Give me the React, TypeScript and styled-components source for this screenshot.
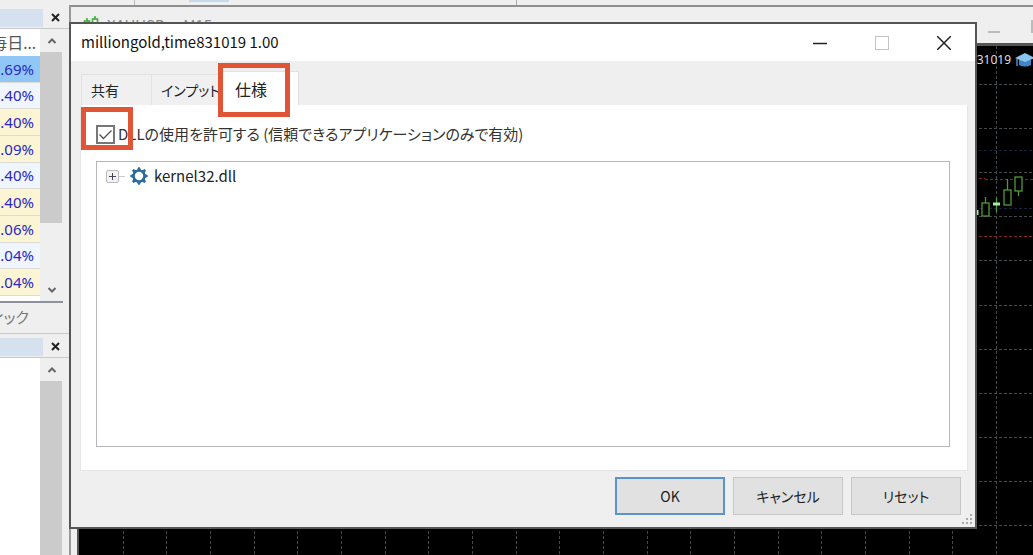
import React, { useState } from "react";
import styled, { createGlobalStyle } from "styled-components";

const GlobalStyle = createGlobalStyle`
  * { box-sizing: border-box; }
  body {
    margin: 0;
    background: #efefef;
    font-family: "Noto Sans CJK JP", "Noto Sans", sans-serif;
    font-feature-settings: "palt";
    font-size: 15px;
    line-height: 20px;
    color: #222;
  }
  button { font: inherit; color: inherit; margin: 0; padding: 0; border: 0; background: none; }
`;

const Desktop = styled.div`
  position: relative;
  display: flex;
  flex-direction: column;
  height: 100vh;
  min-height: 540px;
  overflow: hidden;
`;

const Toolbar = styled.div`
  display: flex;
  flex: none;
  height: 5px;
  padding-left: 134px;
`;

const ToolGroup = styled.div`
  width: 383px;
  padding-left: 54px;
  border-left: 1px solid #bbb;
  border-right: 1px solid #aaa;
`;

const ActiveTool = styled.div`
  width: 40px;
  height: 2px;
  background: #c3daf0;
`;

const Workspace = styled.div`
  display: flex;
  flex: 1;
  min-height: 0;
`;

const Sidebar = styled.aside`
  display: flex;
  flex: none;
  flex-direction: column;
  width: 69px;
  overflow: hidden;
`;

const PanelHeader = styled.div`
  display: flex;
  flex: none;
  align-items: center;
  height: 24px;
  padding-top: 2px;
  border-bottom: 1px solid #c8c8c8;
`;

const PanelCaption = styled.div`
  width: 43px;
  height: 18px;
  background: #d5e1ef;
`;

const PanelClose = styled.button`
  display: grid;
  place-items: center;
  width: 24px;
  height: 20px;
`;

const PanelBody = styled.div<{ $grow?: boolean }>`
  display: flex;
  flex: ${(p) => (p.$grow ? "1" : "none")};
  height: ${(p) => (p.$grow ? "auto" : "274px")};
  margin-right: 6px;
  border-bottom: ${(p) => (p.$grow ? "0" : "2px solid #8d9199")};
  background: #fff;
`;

const Quotes = styled.table`
  width: 40px;
  height: 267px;
  table-layout: fixed;
  border-collapse: collapse;
  background: #fff;
  font-family: "Noto Sans", "Noto Sans CJK JP", sans-serif;
`;

const Cell = styled.div`
  display: flex;
  justify-content: flex-end;
  width: 40px;
  padding-right: 6px;
  overflow: hidden;
  white-space: nowrap;
`;

const HeadCell = styled(Cell)`
  padding-right: 4px;
  color: #555;
  font-size: 16px;
  font-weight: 400;
`;

const QuoteRow = styled.tr<{ $tone: string }>`
  background: ${(p) => p.$tone};
  color: #2a27c4;
  td, th { padding: 0; }
  th { height: 27px; }
  td { border-bottom: 1px solid #dcdcd4; }
`;

const Blank = styled.div`
  width: 40px;
  background: #fff;
`;

const ScrollBar = styled.div`
  display: flex;
  flex-direction: column;
  width: 23px;
  background: #efefef;
`;

const ScrollArrow = styled.button`
  display: grid;
  flex: none;
  place-items: center;
  height: 23px;
`;

const ScrollThumb = styled.div<{ $size?: number }>`
  flex: ${(p) => (p.$size ? `0 0 ${p.$size}px` : "1")};
  margin-right: 1px;
  background: #cbcbcb;
`;

const Spacer = styled.div`
  flex: 1;
`;

const PanelTab = styled.div`
  display: flex;
  flex: none;
  justify-content: flex-end;
  height: 31px;
  padding: 4px 40px 0 0;
  border-bottom: 1px solid #c8c8c8;
  color: #777;
  white-space: nowrap;
`;

const ChartWindow = styled.section`
  display: flex;
  flex: 1;
  flex-direction: column;
  min-width: 0;
  padding-left: 6px;
  border-top: 2px solid #8f8f8f;
  border-left: 2px solid #999;
`;

const ChartTitle = styled.header`
  display: flex;
  flex: none;
  align-items: center;
  justify-content: space-between;
  height: 36px;
  padding-left: 6px;
  color: #888;
  overflow: hidden;
`;

const ChartName = styled.div`
  display: flex;
  align-items: center;
  gap: 6px;
  font-size: 15px;
`;

const ChartArea = styled.div`
  position: relative;
  display: flex;
  flex: 1;
  justify-content: flex-end;
  align-items: flex-start;
  padding-top: 4px;
  border-top: 3px solid #555;
  border-left: 2px solid #555;
  background: #000;
  overflow: hidden;
`;

const ChartPlot = styled.svg`
  position: absolute;
  top: 0;
  right: 0;
`;

const ExpertName = styled.div`
  display: flex;
  position: relative;
  gap: 4px;
  align-items: center;
  color: #ddd;
  font: 12px/20px "Noto Sans", sans-serif;
`;

const Dialog = styled.div`
  position: absolute;
  top: 22px;
  left: 69px;
  right: 56px;
  display: flex;
  flex-direction: column;
  border: 2px solid #555;
  background: #efefef;
`;

const TitleBar = styled.header`
  display: flex;
  align-items: center;
  justify-content: space-between;
  height: 37px;
  padding-left: 10px;
  background: #fff;
  color: #111;
`;

const DialogName = styled.h1`
  margin: 0;
  padding-bottom: 2px;
  font-size: 15px;
  font-weight: 400;
`;

const WindowButtons = styled.div`
  display: flex;
`;

const WindowButton = styled.button`
  display: grid;
  place-items: center;
  width: 62px;
  height: 37px;
`;

const Tabs = styled.div`
  display: flex;
  align-items: flex-end;
  height: 44px;
  padding-left: 10px;
`;

const Tab = styled.button<{ $active?: boolean; $width: number }>`
  position: relative;
  width: ${(p) => p.$width}px;
  height: ${(p) => (p.$active ? 34 : 31)}px;
  padding-left: ${(p) => (p.$active ? 16 : 9)}px;
  border: 1px solid #e2e2e2;
  border-bottom: 0;
  border-left-width: ${(p) => (p.$active ? 0 : 1)}px;
  border-right-width: ${(p) => (p.$active ? 1 : 0)}px;
  background: ${(p) => (p.$active ? "#fff" : "#f0f0f0")};
  font-size: ${(p) => (p.$active ? 16 : 14)}px;
  text-align: left;
  white-space: nowrap;
`;

const Marker = styled.span<{ $x: number; $y: number; $w: number; $h: number }>`
  position: absolute;
  left: ${(p) => p.$x}px;
  top: ${(p) => p.$y}px;
  width: ${(p) => p.$w}px;
  height: ${(p) => p.$h}px;
  border: 5px solid #e05535;
  pointer-events: none;
`;

const Page = styled.div`
  display: flex;
  flex-direction: column;
  gap: 17px;
  margin: 0 7px 0 9px;
  padding: 19px 17px 23px 15px;
  border: 1px solid #e4e4e4;
  border-top: 0;
  background: #fff;
`;

const Permission = styled.label`
  position: relative;
  display: flex;
  align-items: center;
  gap: 3px;
  height: 20px;
  color: #333;
`;

const TickBox = styled.input`
  appearance: none;
  width: 19px;
  height: 19px;
  margin: 0;
  border: 2px solid #777;
  background: #fff;
  &:checked {
    background: #fff url("data:image/svg+xml,%3Csvg xmlns='http://www.w3.org/2000/svg' viewBox='0 0 15 15'%3E%3Cpath d='M1.5 7.5L5.5 11.5L13.5 3.5' fill='none' stroke='%23555' stroke-width='1.4'/%3E%3C/svg%3E") center / 15px 15px no-repeat;
  }
`;

const ModuleList = styled.ul`
  height: 286px;
  margin: 0;
  padding: 4px 9px;
  border: 1px solid #b4b6ba;
  list-style: none;
`;

const ModuleItem = styled.li`
  display: flex;
  align-items: center;
  height: 20px;
`;

const Expander = styled.button`
  display: grid;
  place-items: center;
  width: 13px;
  height: 13px;
  border: 1px solid #bbb;
  border-radius: 2px;
  background: #f2f2f4;
`;

const Branch = styled.span`
  width: 6px;
  margin-right: 5px;
  border-top: 1px solid #ccc;
`;

const ModuleName = styled.span`
  margin-left: 6px;
  font-size: 15px;
`;

const Actions = styled.footer`
  display: flex;
  position: relative;
  justify-content: flex-end;
  gap: 8px;
  padding: 6px 14px 12px;
`;

const Action = styled.button<{ $primary?: boolean }>`
  width: 110px;
  height: 38px;
  border: ${(p) => (p.$primary ? "2px solid #5b94cc" : "1px solid #c6c6c6")};
  background: #e1e1e1;
  font-size: 14px;
`;

const Grip = styled.svg`
  position: absolute;
  right: 2px;
  bottom: 2px;
`;

const quotes = [".69%", ".40%", ".40%", ".09%", ".40%", ".40%", ".06%", ".04%", ".04%"];
const tones = ["#91c7f7", "#f0f6ff", "#fcf5d4", "#fcf5d4", "#f0f6ff", "#fcf5d4", "#fcf5d4", "#f0f6ff", "#fcf5d4"];

const Chevron = ({ down = false }: { down?: boolean }) => (
  <svg width="10" height="8" viewBox="0 0 10 8" fill="none" stroke="#666" strokeWidth="2">
    <path d={down ? "M1.5 2L5 5.5L8.5 2" : "M1.5 6L5 2.5L8.5 6"} />
  </svg>
);

const SmallCross = () => (
  <svg width="9" height="9" viewBox="0 0 9 9" stroke="#222" strokeWidth="2">
    <path d="M1 1L8 8M8 1L1 8" />
  </svg>
);

const Gear = () => (
  <svg width="18" height="18" viewBox="0 0 18 18" stroke="#2a6a9e" fill="none">
    <circle cx="9" cy="9" r="5.4" strokeWidth="2.4" />
    {[0, 45, 90, 135, 180, 225, 270, 315].map((a) => (
      <path key={a} d="M7.6 2.8L8.4 0.7H9.6L10.4 2.8Z" fill="#2a6a9e" strokeWidth="1" transform={`rotate(${a} 9 9)`} />
    ))}
  </svg>
);

const columns = Array.from({ length: 21 }, (_, i) => 917 - i * 43.67);
const lines = Array.from({ length: 11 }, (_, i) => 38 + i * 44.1);

/* The plot has a fixed scale and stays anchored to the newest bar on the right. */
const Plot = () => (
  <ChartPlot width="954" height="509" viewBox="0 0 954 509" fill="none" aria-hidden="true">
    <g stroke="#44494e" strokeDasharray="3 2">
      {columns.map((x) => <path key={x} d={`M${Math.round(x) + 0.5} 0V509`} />)}
      {lines.map((y) => <path key={y} d={`M0 ${Math.round(y) + 0.5}H954`} />)}
    </g>
    <g strokeDasharray="3 2">
      <path d="M890 104.5H954M890 162.5H954" stroke="#16233f" />
      <path d="M890 132.5H906M906 133.5H954M890 190.5H954" stroke="#8c2224" />
    </g>
    <g stroke="#4f9a35" strokeWidth="1.3" fill="#000">
      <path d="M906.5 151V157M928.5 133V144M939.5 145V150M917.5 152V166" />
      <rect x="903" y="157" width="7" height="13" />
      <rect x="925" y="144" width="7" height="15" />
      <rect x="936" y="131" width="7" height="14" />
    </g>
    <path d="M914 158H921M898 164V169" stroke="#a8eaa0" strokeWidth="3" />
  </ChartPlot>
);

export default function App() {
  const [allowed, setAllowed] = useState(true);
  return (
    <Desktop>
      <GlobalStyle />
      <Toolbar>
        <ToolGroup><ActiveTool /></ToolGroup>
      </Toolbar>
      <Workspace>
        <Sidebar>
          <PanelHeader>
            <PanelCaption />
            <PanelClose aria-label="閉じる"><SmallCross /></PanelClose>
          </PanelHeader>
          <PanelBody>
            <Quotes>
              <thead>
                <QuoteRow $tone="#fff"><th><HeadCell>毎日...</HeadCell></th></QuoteRow>
              </thead>
              <tbody>
                {quotes.map((q, i) => (
                  <QuoteRow key={i} $tone={tones[i]}><td><Cell>{q}</Cell></td></QuoteRow>
                ))}
              </tbody>
            </Quotes>
            <ScrollBar>
              <ScrollArrow aria-label="上へ"><Chevron /></ScrollArrow>
              <ScrollThumb $size={171} />
              <Spacer />
              <ScrollArrow aria-label="下へ"><Chevron down /></ScrollArrow>
            </ScrollBar>
          </PanelBody>
          <PanelTab>ィック</PanelTab>
          <PanelHeader>
            <PanelCaption />
            <PanelClose aria-label="閉じる"><SmallCross /></PanelClose>
          </PanelHeader>
          <PanelBody $grow>
            <Blank />
            <ScrollBar>
              <ScrollArrow aria-label="上へ"><Chevron /></ScrollArrow>
              <ScrollThumb />
            </ScrollBar>
          </PanelBody>
        </Sidebar>
        <ChartWindow>
          <ChartTitle>
            <ChartName>
              <svg width="18" height="20" viewBox="0 0 18 20" fill="none" stroke="#3fae3f" strokeWidth="1.6">
                <path d="M4 3V6M12 1V4M4 15V18M12 15V18" />
                <rect x="1.5" y="6" width="5" height="9" />
                <rect x="9.5" y="4" width="5" height="11" />
              </svg>
              XAUUSDm,M15
            </ChartName>
            <svg width="45" height="16" viewBox="0 0 45 16" fill="none" stroke="#bbb" strokeWidth="2">
              <path d="M0 15H12" />
              <rect x="44" y="4" width="12" height="11" />
            </svg>
          </ChartTitle>
          <ChartArea>
            <Plot />
            <ExpertName>
              31019
              <svg width="18" height="16" viewBox="0 0 18 16">
                <path d="M4 8V13Q10 16 16 13V8Z" fill="#3f86c8" />
                <path d="M0 6L10 1L20 6L10 10Z" fill="#8cc4f0" />
                <path d="M2 7V14" stroke="#3f86c8" strokeWidth="1.6" />
              </svg>
            </ExpertName>
          </ChartArea>
        </ChartWindow>
      </Workspace>

      <Dialog role="dialog" aria-labelledby="dialog-name">
        <TitleBar>
          <DialogName id="dialog-name">milliongold,time831019 1.00</DialogName>
          <WindowButtons>
            <WindowButton aria-label="最小化">
              <svg width="14" height="14" stroke="#222" strokeWidth="1.5"><path d="M0 7.5H14" /></svg>
            </WindowButton>
            <WindowButton aria-label="最大化" disabled>
              <svg width="14" height="14" stroke="#c4c4c4" fill="none"><rect x="0.5" y="0.5" width="13" height="13" /></svg>
            </WindowButton>
            <WindowButton aria-label="閉じる">
              <svg width="14" height="14" stroke="#222" strokeWidth="1.5"><path d="M0 0L14 14M14 0L0 14" /></svg>
            </WindowButton>
          </WindowButtons>
        </TitleBar>
        <Tabs role="tablist">
          <Tab role="tab" $width={70}>共有</Tab>
          <Tab role="tab" $width={68}>インプット</Tab>
          <Tab role="tab" aria-selected $active $width={80}>
            仕様
            <Marker $x={-1} $y={-9} $w={72} $h={54} />
          </Tab>
        </Tabs>
        <Page role="tabpanel">
          <Permission>
            <TickBox type="checkbox" checked={allowed} onChange={(e) => setAllowed(e.target.checked)} />
            DLLの使用を許可する (信頼できるアプリケーションのみで有効)
            <Marker $x={-15} $y={-17} $w={52} $h={43} />
          </Permission>
          <ModuleList>
            <ModuleItem>
              <Expander aria-label="展開">
                <svg width="7" height="7" stroke="#445" strokeWidth="1"><path d="M0 3.5H7M3.5 0V7" /></svg>
              </Expander>
              <Branch />
              <Gear />
              <ModuleName>kernel32.dll</ModuleName>
            </ModuleItem>
          </ModuleList>
        </Page>
        <Actions>
          <Action $primary>OK</Action>
          <Action>キャンセル</Action>
          <Action>リセット</Action>
          <Grip width="11" height="11" fill="#aaa">
            <path d="M8 0h2v2h-2zM8 4h2v2h-2zM4 4h2v2h-2zM8 8h2v2h-2zM4 8h2v2h-2zM0 8h2v2h-2z" />
          </Grip>
        </Actions>
      </Dialog>
    </Desktop>
  );
}
